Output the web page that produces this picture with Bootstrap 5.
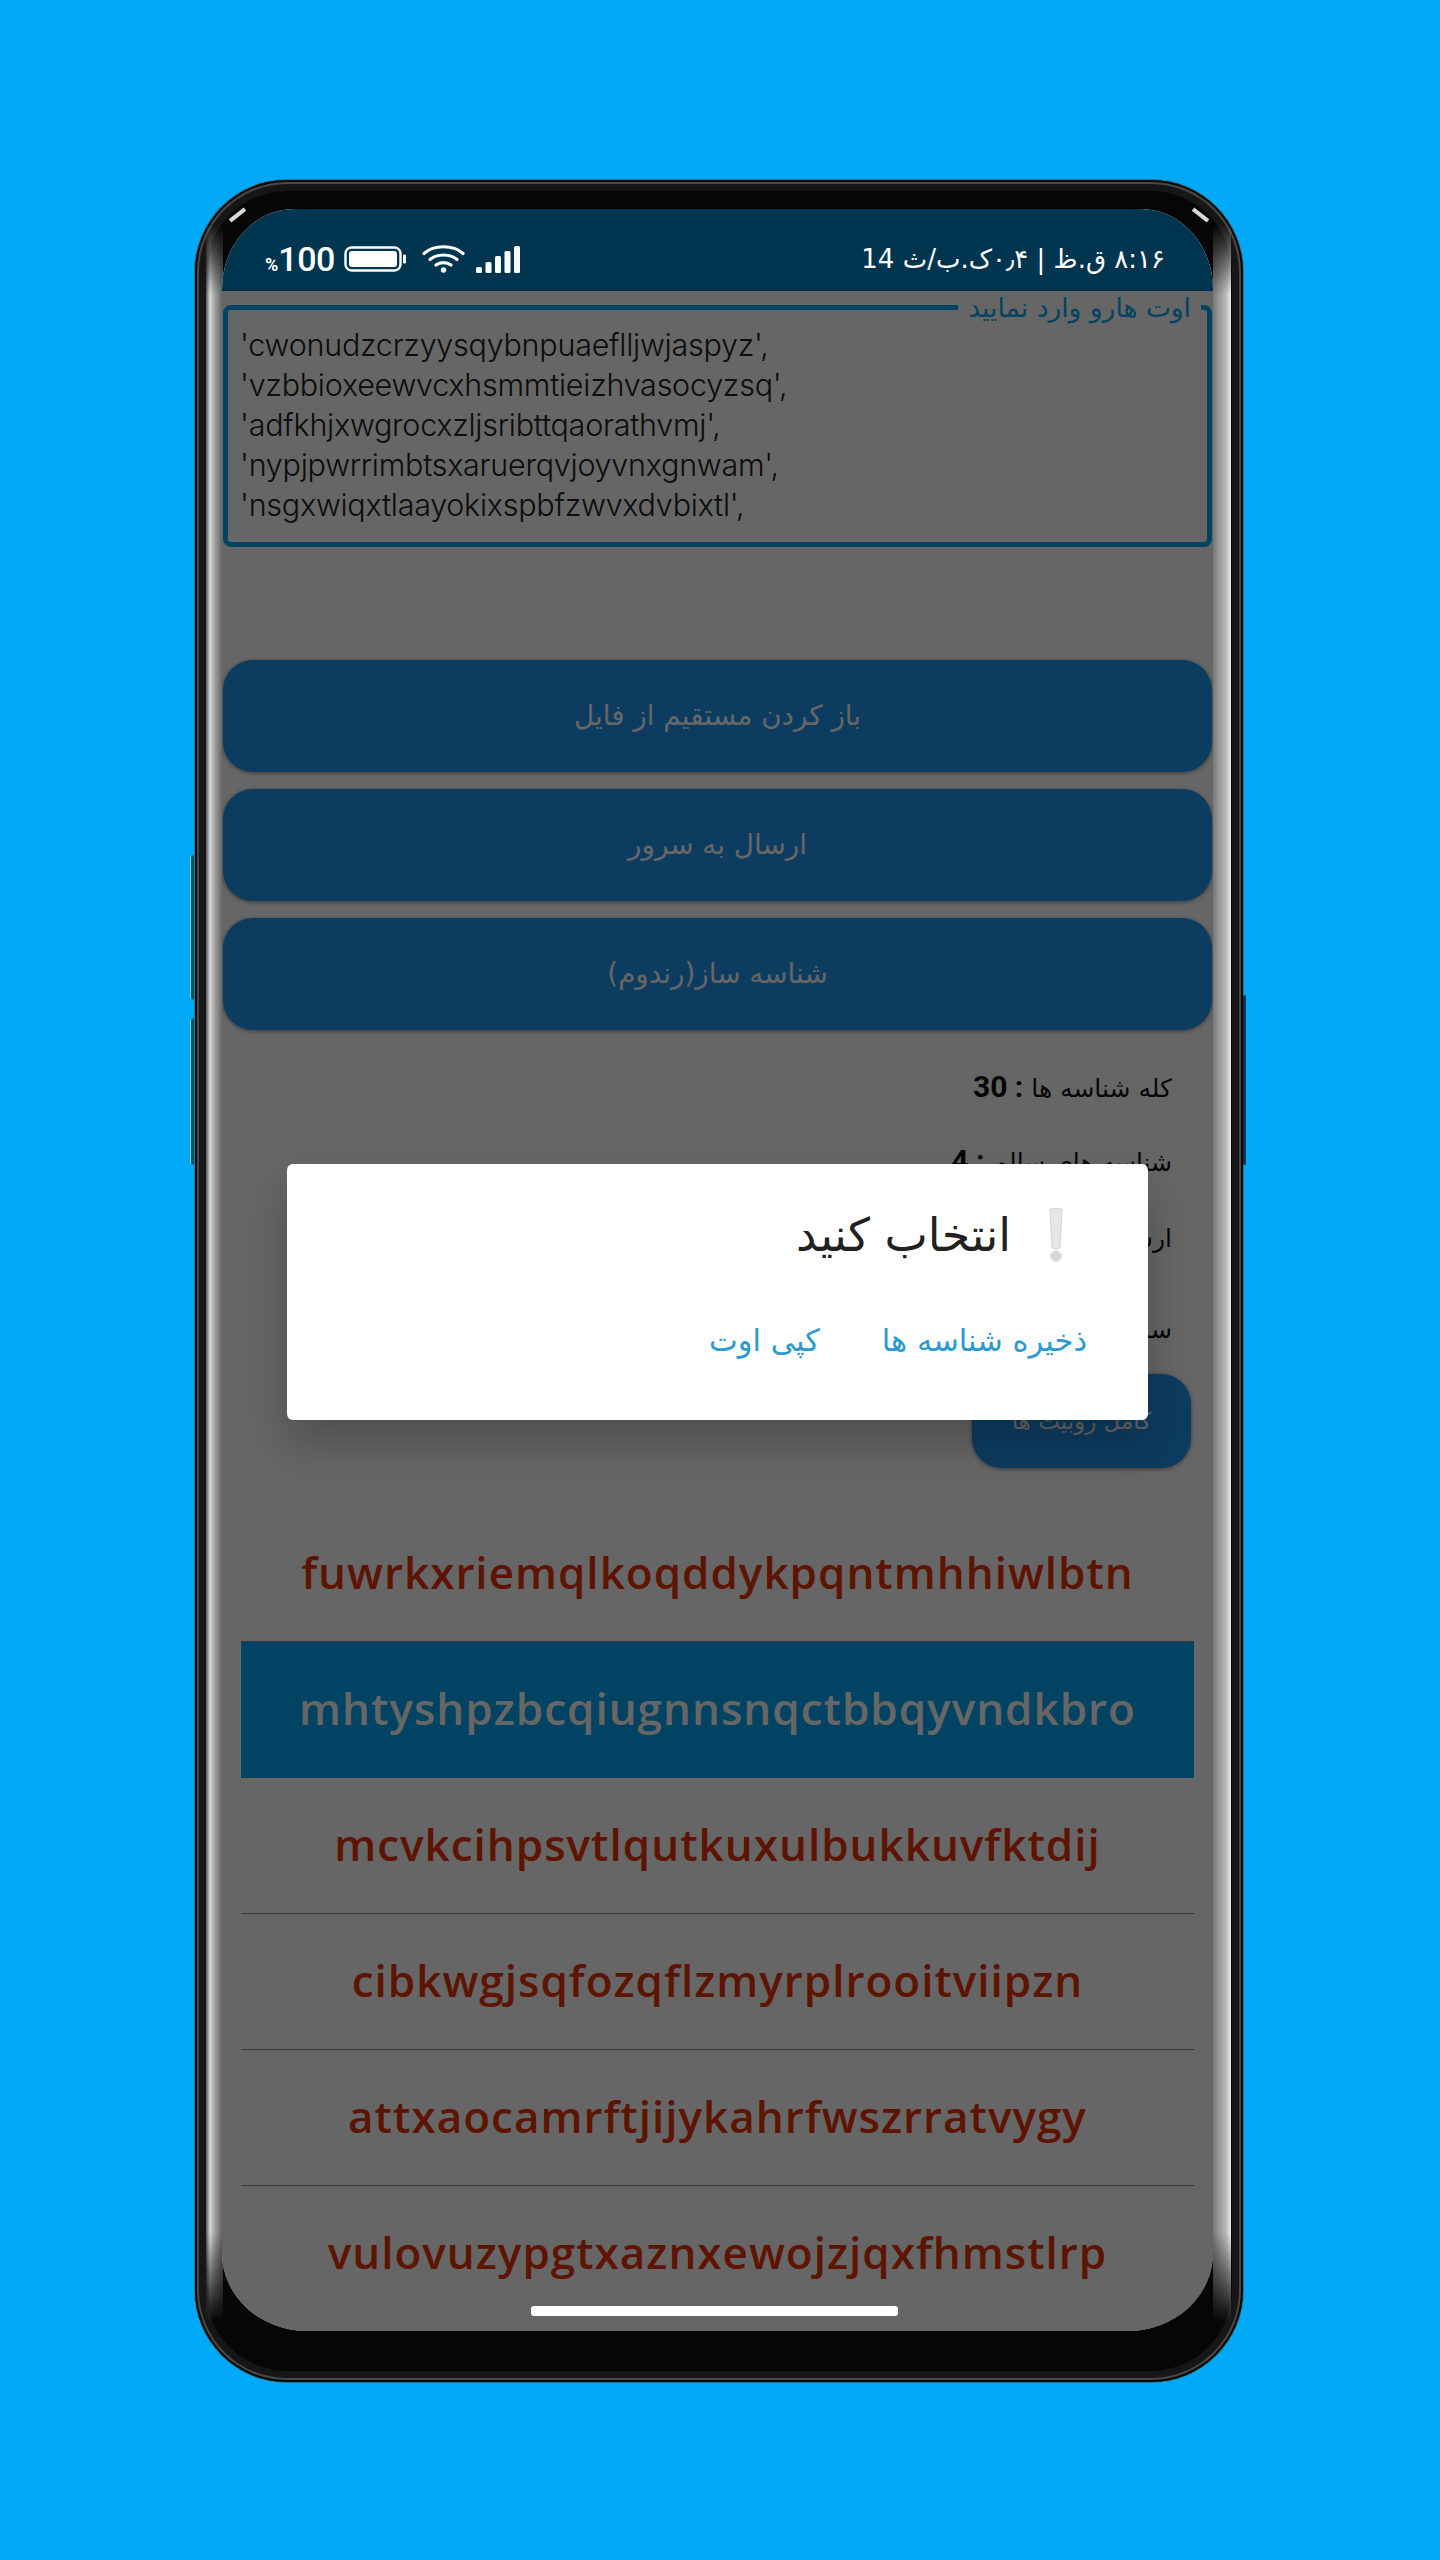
<!doctype html>
<html lang="fa">
<head>
<meta charset="utf-8">
<title>شناسه ساز</title>
<link href="https://cdn.jsdelivr.net/npm/bootstrap@5.3.0/dist/css/bootstrap.min.css" rel="stylesheet">
<style>
html,body{background:#00a9f8;margin:0;height:2560px;overflow:hidden;font-family:"DejaVu Sans","Noto Sans",sans-serif}
.phone-shell{position:relative;width:1048px;height:2202px;margin:180px 0 0 195px;border-radius:92px;background:#060606;box-shadow:0 0 0 1px #1d7f93,inset 0 0 0 2px #0a0a0a,inset 0 0 0 4px #484848,inset 0 0 0 11px #161616;padding:29px 30px 51px 27px}
.phone-shell::before,.phone-shell::after{content:"";position:absolute;top:33px;width:19px;height:4px;background:#d8d8d8}
.phone-shell::before{left:33px;transform:rotate(-38deg)}
.phone-shell::after{right:33px;transform:rotate(38deg)}
.key-btn{position:absolute;width:4px;background:#0f4f66;border-radius:2px;box-shadow:inset 1px 0 0 #63d0e8}
.key-a{left:-5px;top:675px;height:145px}
.key-b{left:-5px;top:838px;height:147px}
.key-c{right:-3px;top:815px;height:170px;width:3px;box-shadow:none;background:#0a3346}
.edge-strip{position:absolute;top:44px;bottom:60px;width:17px;-webkit-mask-image:linear-gradient(180deg,transparent 0,#000 70px,#000 calc(100% - 90px),transparent 100%);mask-image:linear-gradient(180deg,transparent 0,#000 70px,#000 calc(100% - 90px),transparent 100%)}
.edge-l{left:11px;background:linear-gradient(90deg,#555 0,#d8d8d8 4px,#a8a8a8 8px,#666 16px)}
.edge-r{right:12px;width:18px;background:linear-gradient(270deg,#eee 0,#bbb 5px,#777 18px)}
.screen-box{position:relative;z-index:1;width:991px;height:2122px;background:#fff;overflow:hidden;border-radius:72px 72px 85px 85px/80px 80px 78px 78px}
.status-strip{height:82px;background:#003550;color:#fff;padding:18px 48px 0 43px;direction:ltr;font-family:Roboto,"DejaVu Sans",sans-serif}
.pct-sign{font-size:18px;font-weight:700}
.pct-val{font-size:34px;font-weight:500;margin-right:9px;letter-spacing:-.5px}
.clock-text{font-size:26px;font-family:"DejaVu Sans",sans-serif;direction:rtl;white-space:nowrap}
.page-flow{direction:rtl}
.out-box{position:relative;margin:14px 1px 0 1px;height:242px;border:5px solid #03a9f4;border-radius:8px;padding:15px 12px;direction:ltr;font-family:Inter,sans-serif;font-weight:300;font-size:30.500px;line-height:40px;color:#222;letter-spacing:-.25px}
.out-legend{position:absolute;top:-18px;right:6px;background:#fff;padding:0 10px;direction:rtl;font-family:"DejaVu Sans",sans-serif;font-size:26.500px;line-height:32px;color:#03a9f4;font-weight:400;letter-spacing:0}
.act-stack{margin-top:113px;gap:17px;padding:0 1px 0 1px}
.act-btn{height:112px;border-radius:30px;background:#2196f3;color:#fff;font-size:27.800px;border:0;box-shadow:0 1px 4px rgba(0,0,0,.45)}
.stat-line{font-size:25px;line-height:36px;margin-right:41px;color:#111}
.stat-line b{font-family:Roboto,"DejaVu Sans",sans-serif;font-size:30px}
.s1{margin-top:39px}.s2{margin-top:36px}.s3{margin-top:38px}.s4{margin-top:53px}
.mini-btn{display:block;margin:26px 22px 0 auto;width:219px;height:94px;border-radius:30px;background:#2196f3;color:#fff;font-size:23px;border:0;box-shadow:0 1px 4px rgba(0,0,0,.45)}
.key-list{margin:38px 19px 0;direction:ltr;border-radius:0;--bs-list-group-bg:transparent;--bs-list-group-border-color:#888;--bs-list-group-active-bg:#03a9f4;--bs-list-group-active-border-color:#03a9f4;--bs-list-group-active-color:#fff}
.key-list .list-group-item{height:136px;padding:0 0 4px;font-family:"Open Sans",sans-serif;font-weight:600;font-size:44px;letter-spacing:1px;color:#e83400;border-left:0;border-right:0;border-top:0;display:flex;align-items:center;justify-content:center}
.key-list .list-group-item:last-child{border-bottom:0}
.key-list .list-group-item.active{color:#fff;background:#03a9f4;margin-top:0}
.dim-layer{position:absolute;z-index:5;left:0;right:0;top:82px;bottom:0;background:rgba(0,0,0,.6)}
.ask-dialog{position:absolute;z-index:6;left:65px;top:955px;width:861px;height:256px;background:#fff;border:0;border-radius:6px;box-shadow:0 24px 44px rgba(0,0,0,.22);direction:rtl;color:#212121}
.ask-title{height:146px;gap:38px;font-size:46px;padding:0 85px 4px 0}
.ask-actions{gap:62px;font-size:30.500px;line-height:44px;color:#2c99cf;padding-right:61px;margin-top:9px}
.home-pill{position:absolute;z-index:7;left:309px;top:2097px;width:367px;height:10px;border-radius:3px;background:#fff}
</style>
</head>
<body>
<div class="phone-shell">
  <span class="key-btn key-a"></span><span class="key-btn key-b"></span><span class="key-btn key-c"></span>
  <span class="edge-strip edge-l"></span><span class="edge-strip edge-r"></span>
  <div class="screen-box">
    <div class="status-strip d-flex align-items-center justify-content-between">
      <div class="d-flex align-items-center">
        <span class="d-flex align-items-baseline"><span class="pct-sign">%</span><span class="pct-val">100</span></span>
        <svg width="62" height="26" viewBox="0 0 62 26"><rect x="1.500" y="1.500" width="55" height="23" rx="6" fill="none" stroke="#fff" stroke-width="2.400"/><rect x="5" y="5" width="48" height="16" rx="3" fill="#fff"/><rect x="59" y="8.500" width="3" height="9" rx="1.200" fill="#fff"/></svg>
        <svg class="ms-3" width="43" height="28" viewBox="0 0 43 28"><g fill="none" stroke="#fff" stroke-width="3.200" stroke-linecap="round"><path d="M2 8.500C12-.5 31-.5 41 8.500"/><path d="M8 14.500c7-6 20-6 27 0"/><path d="M14 20c4-3.200 11-3.200 15 0"/></g><circle cx="21.500" cy="25" r="2.700" fill="#fff"/></svg>
        <svg style="margin-left:11px" width="44" height="27" viewBox="0 0 44 27"><g fill="#fff"><rect x="0" y="21" width="6" height="6" rx="1.500"/><rect x="9.500" y="16" width="6" height="11" rx="1.500"/><rect x="19" y="10" width="6" height="17" rx="1.500"/><rect x="28.500" y="5" width="6" height="22" rx="1.500"/><rect x="38" y="0" width="6" height="27" rx="1.500"/></g></svg>
      </div>
      <div class="clock-text">۸:۱۶ ق.ظ | ۰٫۴ک.ب/ث 14</div>
    </div>
    <div class="page-flow">
      <div class="out-box">
        <span class="out-legend">اوت هارو وارد نمایید</span>
        'cwonudzcrzyysqybnpuaeflljwjaspyz',<br>
        'vzbbioxeewvcxhsmmtieizhvasocyzsq',<br>
        'adfkhjxwgrocxzljsribttqaorathvmj',<br>
        'nypjpwrrimbtsxaruerqvjoyvnxgnwam',<br>
        'nsgxwiqxtlaayokixspbfzwvxdvbixtl',
      </div>
      <div class="act-stack d-flex flex-column">
        <button class="btn act-btn">باز کردن مستقیم از فایل</button>
        <button class="btn act-btn">ارسال به سرور</button>
        <button class="btn act-btn">شناسه ساز(رندوم)</button>
      </div>
      <p class="stat-line s1 mb-0">کله شناسه ها <b>: 30</b></p>
      <p class="stat-line s2 mb-0">شناسه های سالم <b>: 4</b></p>
      <p class="stat-line s3 mb-0">ارسال شده <b>: 0</b></p>
      <p class="stat-line s4 mb-0">سرور <b>: 0</b></p>
      <button class="btn mini-btn">کامل روبیت ها</button>
      <div class="list-group key-list">
        <div class="list-group-item">fuwrkxriemqlkoqddykpqntmhhiwlbtn</div>
        <div class="list-group-item active">mhtyshpzbcqiugnnsnqctbbqyvndkbro</div>
        <div class="list-group-item">mcvkcihpsvtlqutkuxulbukkuvfktdij</div>
        <div class="list-group-item">cibkwgjsqfozqflzmyrplrooitviipzn</div>
        <div class="list-group-item">attxaocamrftjijykahrfwszrratvygy</div>
        <div class="list-group-item">vulovuzypgtxaznxewojzjqxfhmstlrp</div>
      </div>
    </div>
    <div class="dim-layer"></div>
    <div class="card ask-dialog">
      <div class="ask-title d-flex align-items-center">
        <svg width="14" height="54" viewBox="0 0 14 54"><path d="M1 2.500C1 1 2 .5 3 .5h8c1 0 2 .5 2 2L11 39c0 1-1 1.500-2 1.500H5c-1 0-2-.5-2-1.500z" fill="#e6e6e6" stroke="#d4d4d4"/><circle cx="7" cy="48" r="5.500" fill="#d6d6d6" stroke="#e6e6e6"/></svg>
        <span>انتخاب کنید</span>
      </div>
      <div class="ask-actions d-flex">
        <span>ذخیره شناسه ها</span>
        <span>کپی اوت</span>
      </div>
    </div>
    <div class="home-pill"></div>
  </div>
</div>
<script src="https://cdn.jsdelivr.net/npm/bootstrap@5.3.0/dist/js/bootstrap.bundle.min.js"></script>
</body>
</html>
